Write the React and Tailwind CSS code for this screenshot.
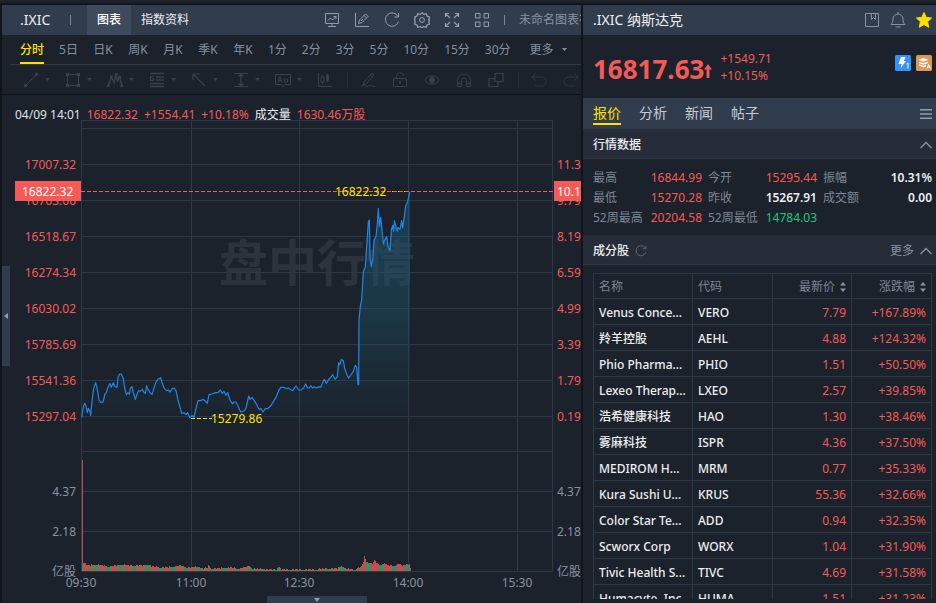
import React, { useState } from 'react';
import clsx from 'clsx';

const PERIODS = ['分时', '5日', '日K', '周K', '月K', '季K', '年K', '1分', '2分', '3分', '5分', '10分', '15分', '30分'];

const QUOTE_TABS = ['报价', '分析', '新闻', '帖子'];

const STATS = [
    { label: '最高', value: '16844.99', tone: 'up' },
    { label: '今开', value: '15295.44', tone: 'up' },
    { label: '振幅', value: '10.31%', tone: 'flat' },
    { label: '最低', value: '15270.28', tone: 'up' },
    { label: '昨收', value: '15267.91', tone: 'flat' },
    { label: '成交额', value: '0.00', tone: 'flat' },
    { label: '52周最高', value: '20204.58', tone: 'up' },
    { label: '52周最低', value: '14784.03', tone: 'down' },
];

const TONES = {
    up: 'text-[#f65a57]',
    down: 'text-[#21c47a]',
    flat: 'text-[#eceef1] font-semibold',
};

const STOCKS = [
    ['Venus Conce...', 'VERO', '7.79', '+167.89%'],
    ['羚羊控股', 'AEHL', '4.88', '+124.32%'],
    ['Phio Pharma...', 'PHIO', '1.51', '+50.50%'],
    ['Lexeo Therap...', 'LXEO', '2.57', '+39.85%'],
    ['浩希健康科技', 'HAO', '1.30', '+38.46%'],
    ['雾麻科技', 'ISPR', '4.36', '+37.50%'],
    ['MEDIROM H...', 'MRM', '0.77', '+35.33%'],
    ['Kura Sushi U...', 'KRUS', '55.36', '+32.66%'],
    ['Color Star Te...', 'ADD', '0.94', '+32.35%'],
    ['Scworx Corp', 'WORX', '1.04', '+31.90%'],
    ['Tivic Health S...', 'TIVC', '4.69', '+31.58%'],
    ['Humacyte, Inc.', 'HUMA', '1.51', '+31.23%'],
];

// y, price, change
const PRICE_AXIS = [
    [164, '17007.32', '11.39%'],
    [200, '16763.00', '9.79%'],
    [236, '16518.67', '8.19%'],
    [272, '16274.34', '6.59%'],
    [308, '16030.02', '4.99%'],
    [344, '15785.69', '3.39%'],
    [380, '15541.36', '1.79%'],
    [416, '15297.04', '0.19%'],
];

const VOLUME_AXIS = [
    [491, '4.37'],
    [531, '2.18'],
    [571, '亿股'],
];

const TIME_AXIS = [
    [81, '09:30'],
    [191, '11:00'],
    [299, '12:30'],
    [408, '14:00'],
    [517, '15:30'],
];

// Price line, drawn at three units per pixel
const PRICE_LINE =
    '245,352 250,320 254,310 258,318 262,338 265,325 270,335 272,346 277,295 281,265 287,248 292,268 297,300 303,308 309,306 315,282 319,278 324,262 330,250 334,262 340,248 345,260 351,262 354,232 359,222 364,222 370,236 375,268 379,284 384,278 388,282 391,264 396,260 400,278 406,298 412,280 416,272 420,274 427,268 431,276 436,280 440,257 444,268 450,278 456,284 462,264 468,246 474,238 482,233 487,250 493,266 500,272 505,270 510,276 517,266 523,264 528,272 534,300 540,322 545,340 552,338 558,344 563,338 570,354 576,346 582,352 588,325 594,302 602,302 609,298 615,302 622,310 627,284 636,282 645,278 654,278 661,270 667,280 672,274 678,286 683,278 690,300 697,312 702,306 708,306 714,318 722,336 730,334 738,325 746,288 750,298 756,292 763,302 770,314 777,328 783,326 789,336 796,326 803,326 812,318 820,305 828,292 836,272 842,262 852,262 860,266 866,264 870,268 878,272 888,258 896,270 904,270 912,262 917,252 923,264 928,264 933,257 938,264 944,260 950,264 956,260 962,262 968,248 973,238 979,250 985,240 992,232 998,224 1005,238 1012,230 1016,188 1020,194 1024,178 1030,182 1034,205 1040,222 1046,234 1052,226 1060,214 1066,196 1070,202 1074,254 1076,254 1077,60 1081,20 1085,0 1090,-85 1096,-100 1100,-160 1105,-235 1108,-240 1110,-130 1114,-100 1118,-120 1122,-180 1128,-190 1132,-230 1135,-275 1138,-220 1142,-248 1145,-220 1150,-168 1155,-182 1160,-190 1164,-160 1170,-148 1174,-210 1178,-224 1181,-206 1183,-238 1187,-224 1191,-206 1194,-218 1200,-212 1205,-238 1208,-216 1213,-250 1217,-282 1223,-295 1227,-315 1230,-325';

// x, height
const VOLUME_SHAPE = [
    [83, 8], [88, 5], [94, 6], [104, 5], [109, 4], [121, 6], [130, 5], [140, 5], [147, 6], [152, 4], [165, 3],
    [180, 5], [187, 3], [198, 4], [203, 2], [207, 3], [208, 5], [211, 2], [230, 3], [240, 2], [249, 5], [252, 2],
    [276, 1], [278, 4], [281, 1], [310, 1], [325, 2], [337, 2], [341, 5], [345, 2], [355, 1], [361, 4], [363, 9],
    [364, 14], [366, 9], [372, 7], [374, 10], [378, 6], [385, 7], [387, 5], [395, 5], [398, 7], [403, 5], [406, 7],
    [409, 6], [410, 2],
];

const volumeAt = (x) => {
    const i = VOLUME_SHAPE.findIndex(([px]) => px >= x);
    if (i <= 0) return VOLUME_SHAPE[0][1];
    const [x0, h0] = VOLUME_SHAPE[i - 1];
    const [x1, h1] = VOLUME_SHAPE[i];
    return h0 + ((h1 - h0) * (x - x0)) / (x1 - x0);
};

const VOLUME_BARS = Array.from({ length: 328 }, (_, i) => {
    const x = 83 + i;
    const noise = (i * 7919 + i * i * 31) % 13;
    const green = x > 363 ? noise < 4 : noise < 6;
    return { x, h: Math.max(1, Math.round(volumeAt(x) + (noise % 3) * 0.5)), color: green ? '#209a65' : '#c94b4c' };
});

const Icon = ({ size = 16, className, children }) => (
    <svg width={size} height={size} viewBox="0 0 16 16" fill="none" stroke="currentColor" strokeWidth="1" className={clsx('shrink-0', className)}>
        {children}
    </svg>
);

const Caret = ({ className }) => (
    <svg width="5" height="3" viewBox="0 0 5 3" fill="currentColor" className={clsx('shrink-0', className)}>
        <path d="M0 0h5L2.500 3z" />
    </svg>
);

const Chevron = () => (
    <svg width="12" height="8" viewBox="0 0 12 8" fill="none" stroke="#8993a2" strokeWidth="1.300">
        <path d="M.5 7 6 1.500 11.500 7" />
    </svg>
);

const SortIcon = () => (
    <svg width="6" height="10" viewBox="0 0 6 10" fill="#8993a2">
        <path d="M0 3.500h6L3 0zM0 6.500h6L3 10z" />
    </svg>
);

const HEADER_ICONS = [
    ['行情', <><path d="M1.500 1.500h13v10h-13zM8 11.500v3M4 14.500h8" /><path d="m4 8.500 2.500-2.500 2 2L12 4.500M9.500 4.500H12V7" /></>],
    ['编辑', <><path d="M1.500 1v13.500H15" /><path d="m4.500 11.500 1-3.500 6-6 2.500 2.500-6 6zM10 3.500 12.500 6M7 9l2-2" /></>],
    ['刷新', <><path d="M14 4.500A6.700 6.700 0 1 0 14.500 9.500" /><path d="M14.500 1v4h-4" /></>],
    ['设置', <><path strokeWidth="1.300" d="m8 .8 1.800 1.600 2.400-.6.9 2.300 2.300.9-.6 2.400L15.600 8l-.8 1.600.6 2.400-2.300.9-.9 2.300-2.400-.6L8 15.500l-1.800-.9-2.400.6-.9-2.300-2.300-.9.6-2.400L.4 8l.8-1.600L.6 5l2.300-.9.9-2.300 2.400.6z" /><circle cx="8" cy="8" r="2.400" /></>],
    ['全屏', <path strokeWidth="1.200" d="M5 1.500H1.500V5M1.500 1.500 6 6M11 1.500h3.500V5M14.500 1.500 10 6M5 14.500H1.500V11M1.500 14.500 6 10M11 14.500h3.500V11M14.500 14.500 10 10" />],
    ['布局', <path d="M1.500 1.500h4.500v4.500H1.500zM10 1.500h4.500v4.500H10zM1.500 10h4.500v4.500H1.500zM10 10h4.500v4.500H10z" />],
];

const MENU_TOOLS = [
    ['线段', <><path d="M3 13 13 3" /><circle cx="2.500" cy="13.500" r="1.300" fill="currentColor" /><circle cx="13.500" cy="2.500" r="1.300" fill="currentColor" /></>],
    ['矩形', <><path d="M2.500 2.500h11v11h-11z" /><path fill="currentColor" stroke="none" d="M1 1h3v3H1zM12 1h3v3h-3zM1 12h3v3H1zM12 12h3v3h-3z" /></>],
    ['形态', <><path strokeWidth="1.400" d="m1 14 3.500-9L7 10.500 9 3l1.500 6L12.500 5l2.500 9" /><path fill="currentColor" stroke="none" d="M0 12.500h2.500V15H0zM3 3.500h2.500V6H3zM8 1h2.500v2.500H8zM11.500 4H14v2.500h-2.500zM13.500 12.500H16V15h-2.500z" /></>],
    ['斐波那契', <><path strokeWidth="1.400" d="M1 1.500h14M7 5h8M7 8h8M1 11.500h14M1 14.500h14" /><path strokeWidth="1.200" d="M4.500 4.500h-3v4h3V7H3" /></>],
    ['箭头', <path strokeWidth="1.200" d="M2 8V2h7M2 2l12 12" />],
    ['测量', <path strokeWidth="1.200" d="M1 1.500h14M1 14.500h14M8 2v12M5.500 4.500 8 2l2.500 2.500M5.500 11.500 8 14l2.500-2.500" />],
    ['标注', <><path d="M.5 2.500h15v10H10l-2 2-2-2H.5z" /><path d="m3 10 2-5.500L7 10M4 8.500h2M12.500 7v3M12.500 8.500a1.700 1.700 0 1 0-3.400 0 1.700 1.700 0 0 0 3.400 0" /></>],
];

const TOOLS = [
    ['画笔', <><path d="m4 10 8-9 2 2-8 9-3 1zM10.500 3l2 2" /><path d="M1 14.500c3-3 4-1 5 0s2-1 4-1 3 1 5 1" /></>],
    ['锁定', <><path d="M1.500 6.500h13v8h-13zM4.500 6.500v-2a3.500 3.500 0 0 1 7-.5" /><path strokeWidth="1.500" d="M8 9v3" /></>],
    ['显示', <><path d="M.5 8C4 2.500 12 2.500 15.500 8 12 13.500 4 13.500.5 8z" /><circle cx="8" cy="8" r="2.500" fill="currentColor" /></>],
    ['磁吸', <path d="M1.500 14.500v-6a6.500 6.500 0 0 1 13 0v6h-4v-6a2.500 2.500 0 0 0-5 0v6zM1.500 11.500h4M10.500 11.500h4" />],
    ['组合', <path strokeWidth="1.200" d="M7 1.500h8v8H7zM7 6.500H1v8h9v-5" />],
];

const ChartHeader = () => (
    <header className="flex h-[30px] shrink-0 items-center bg-[#313c4d] text-xs whitespace-nowrap">
        <h1 className="w-[68px] shrink-0 pl-[18px] text-sm text-[#eceef1]">.IXIC</h1>
        <span className="h-2.5 w-px shrink-0 bg-[#7a8596]" />
        <button className="ml-4 h-full shrink-0 bg-[#3f4a5c] px-2.5 font-medium text-white">图表</button>
        <button className="h-full shrink-0 px-2.5 text-[#eceef1]">指数资料</button>
        <div className="ml-[125px] flex shrink-0 gap-3.5 text-[#939dab]">
            {HEADER_ICONS.map(([name, shape]) => (
                <button key={name} aria-label={name}>
                    <Icon>{shape}</Icon>
                </button>
            ))}
        </div>
        <span className="mx-3.5 h-2.5 w-px shrink-0 bg-[#7a8596]" />
        <button className="text-[#8993a2]">未命名图表布局</button>
    </header>
);

const PeriodBar = () => {
    const [active, setActive] = useState('分时');

    return (
        <nav className="ml-2 flex h-[30px] shrink-0 gap-[15px] border-b border-[#2f3b49] pl-2.5 text-xs whitespace-nowrap text-[#8590a0]">
            {PERIODS.map((period) => (
                <button
                    key={period}
                    onClick={() => setActive(period)}
                    className={clsx(
                        'h-[29px] shrink-0 border-b-2 pt-0.5',
                        period.endsWith('K') && 'w-5',
                        period === active ? 'border-[#ffe100] font-medium text-[#ffe100]' : 'border-transparent'
                    )}
                >
                    {period}
                </button>
            ))}
            <button className="ml-1 flex shrink-0 items-center gap-2">
                更多 <Caret />
            </button>
        </nav>
    );
};

const DrawingBar = () => (
    <div className="flex h-[30px] shrink-0 items-center border-b border-[#10151b] pl-[21px] text-[#38424e]">
        {MENU_TOOLS.map(([name, shape]) => (
            <button key={name} aria-label={name} className="flex w-[42px] shrink-0 items-center gap-1.5">
                <Icon>{shape}</Icon>
                <Caret />
            </button>
        ))}
        <button aria-label="指标" className="shrink-0">
            <Icon>
                <path d="M1.500 1v13.500H15M5.500 3v2M5.500 10v2M4 5h3v5H4zM10.500 2v8" />
                <path d="M9.500 3.500h2v5h-2z" fill="currentColor" />
            </Icon>
        </button>
        <span className="mx-3.5 h-3.5 w-px shrink-0 bg-[#262e39]" />
        <div className="-ml-0.5 flex shrink-0 gap-4">
            {TOOLS.map(([name, shape]) => (
                <button key={name} aria-label={name}>
                    <Icon>{shape}</Icon>
                </button>
            ))}
        </div>
        <span className="mx-3.5 h-3.5 w-px shrink-0 bg-[#262e39]" />
        <div className="-ml-0.5 flex shrink-0 gap-4 text-[#2e3743]">
            <button aria-label="撤销">
                <Icon><path d="M4.500 1.500 1 5l3.500 3.500M1 5h9.500a4.500 4.500 0 0 1 0 9H4" /></Icon>
            </button>
            <button aria-label="重做">
                <Icon><path d="M11.500 1.500 15 5l-3.500 3.500M15 5H5.500a4.500 4.500 0 0 0 0 9H12" /></Icon>
            </button>
        </div>
    </div>
);

const Chart = () => (
    <svg viewBox="2 120 579 483" preserveAspectRatio="xMinYMin meet" className="min-h-0 w-full flex-1 text-xs">
        <defs>
            <linearGradient id="area" gradientUnits="userSpaceOnUse" x1="0" y1="191" x2="0" y2="440">
                <stop offset="0" stopColor="#1b5d78" stopOpacity=".5" />
                <stop offset=".5" stopColor="#1b5870" stopOpacity=".38" />
                <stop offset=".85" stopColor="#1b3a48" stopOpacity=".2" />
                <stop offset="1" stopColor="#1b222b" stopOpacity="0" />
            </linearGradient>
            <clipPath id="under">
                <polygon points={`${PRICE_LINE} 1230,453 245,453`} transform="translate(0 300) scale(.33333)" />
            </clipPath>
        </defs>

        <text x="219" y="281" fill="#2b333d" fontSize="49" fontWeight="700">盘中行情</text>

        {/* grid */}
        <g stroke="#2e3947" shapeRendering="crispEdges">
            {[120, 128, 164, 200, 236, 272, 308, 344, 380, 416, 451, 491, 531, 571].map((y) => (
                <line key={y} x1="81" x2="553" y1={y + 0.5} y2={y + 0.5} />
            ))}
            {[81, 191, 299, 408, 517, 552].map((x) => (
                <line key={x} x1={x + 0.5} x2={x + 0.5} y1="120" y2="572" />
            ))}
        </g>

        {/* price */}
        <rect x="81" y="185" width="330" height="266" fill="url(#area)" clipPath="url(#under)" />
        <line x1="81" x2="553" y1="191.500" y2="191.500" stroke="#f65a57" strokeDasharray="4 2" shapeRendering="crispEdges" />
        <polyline points={PRICE_LINE} transform="translate(0 300) scale(.33333)" fill="none" stroke="#2186e6" strokeWidth="3.600" strokeLinejoin="round" />
        <g stroke="#ffe100" strokeDasharray="4 2" shapeRendering="crispEdges">
            <line x1="191" x2="212" y1="418.500" y2="418.500" />
            <line x1="392" x2="408" y1="191.500" y2="191.500" strokeDasharray="1 5" />
        </g>
        <g fill="#ffe100">
            <text x="211" y="423">15279.86</text>
            <text x="335" y="196">16822.32</text>
        </g>

        {/* volume */}
        <g shapeRendering="crispEdges">
            {VOLUME_BARS.map((bar) => (
                <rect key={bar.x} x={bar.x} y={571 - bar.h} width="1" height={bar.h} fill={bar.color} />
            ))}
            <rect x="82" y="460" width="1" height="111" fill="#c94b4c" />
        </g>

        {/* axes */}
        <g fill="#f65a57">
            {PRICE_AXIS.map(([y, price, change]) => (
                <React.Fragment key={y}>
                    <text x="76" y={y + 5} textAnchor="end">{price}</text>
                    <text x="557" y={y + 5}>{change}</text>
                </React.Fragment>
            ))}
            <rect x="15" y="181" width="66" height="20" />
            <rect x="554" y="181" width="60" height="20" />
        </g>
        <g fill="#fff">
            <text x="22" y="196">16822.32</text>
            <text x="557" y="196">10.18%</text>
        </g>
        <g fill="#8993a2">
            {VOLUME_AXIS.map(([y, label]) => (
                <React.Fragment key={y}>
                    <text x="76" y={y + 5} textAnchor="end">{label}</text>
                    <text x="557" y={y + 5}>{label}</text>
                </React.Fragment>
            ))}
            {TIME_AXIS.map(([x, label]) => (
                <text key={x} x={x} y="587" textAnchor="middle">{label}</text>
            ))}
        </g>
    </svg>
);

const ChartPanel = () => (
    <main className="relative flex min-w-0 flex-1 flex-col overflow-hidden bg-[#1b222b]">
        <ChartHeader />
        <PeriodBar />
        <DrawingBar />
        <div className="flex h-[25px] shrink-0 gap-1.5 pt-3.5 pl-[13px] text-xs leading-3 whitespace-nowrap text-[#f65a57]">
            <span className="text-[#dfe3e8]">04/09 14:01</span>
            <span>16822.32</span>
            <span>+1554.41</span>
            <span>+10.18%</span>
            <span className="text-[#eceef1]">成交量</span>
            <span>1630.46万股</span>
        </div>
        <Chart />
        <button aria-label="展开左侧" className="absolute top-[261px] left-0 flex h-[100px] w-2 items-center justify-center bg-[#313c4d] text-[#939dab]">
            <svg width="4" height="6" viewBox="0 0 4 6" fill="currentColor"><path d="M4 0v6L0 3z" /></svg>
        </button>
        <button aria-label="收起底部" className="absolute bottom-0 left-[265px] flex h-[7px] w-[100px] items-center justify-center bg-[#313c4d] text-[#939dab]">
            <svg width="6" height="4" viewBox="0 0 6 4" fill="currentColor"><path d="M0 0h6L3 4z" /></svg>
        </button>
    </main>
);

const SectionHeader = ({ title, children }) => (
    <div className="flex h-[30px] shrink-0 items-center justify-between border-b border-[#2e3947] bg-[#262d38] pt-0.5 pr-1 pl-2.5 text-xs">
        {title}
        {children}
    </div>
);

const QuotePanel = () => {
    const [tab, setTab] = useState('报价');

    return (
        <aside className="flex w-[353px] shrink-0 flex-col overflow-hidden bg-[#1b222b] pb-1">
            <header className="flex h-[30px] shrink-0 items-center bg-[#313c4d] pr-1 pl-2.5 text-sm text-[#eceef1]">
                <h2 className="flex-1">.IXIC 纳斯达克</h2>
                <div className="flex items-center gap-2.5 text-[#8993a2]">
                    <button aria-label="笔记"><Icon><path d="M1.500 1.500h13v13h-13zM7.500 1.500v6l2-2 2 2v-6" /></Icon></button>
                    <button aria-label="提醒"><Icon><path d="M1 12.500h14c-1.500-1.500-2-2.500-2-5.500a5 5 0 0 0-10 0c0 3-.5 4-2 5.500zM8 2V0M5.500 15h5" /></Icon></button>
                    <button aria-label="自选">
                        <svg width="16" height="16" viewBox="0 0 16 16" fill="#ffe100" stroke="#ffe100" strokeLinejoin="round">
                            <path d="m8 .5 2.200 4.900 5.300.6-3.900 3.600 1.100 5.700L8 12.600l-4.700 2.700 1.100-5.700L.5 6l5.300-.6z" />
                        </svg>
                    </button>
                </div>
            </header>

            <div className="flex h-[63px] shrink-0 items-center pr-1 pl-2.5 text-[#f65a57]">
                <strong className="pt-1 text-[26px] leading-8 font-bold">16817.63</strong>
                <svg width="8" height="14" viewBox="0 0 8 14" fill="currentColor" className="mt-2">
                    <path d="M4 0 0 5.500h2.600V14h2.800V5.500H8z" />
                </svg>
                <div className="ml-2 flex-1 text-xs leading-[17px]">
                    <p>+1549.71</p>
                    <p>+10.15%</p>
                </div>
                <div className="mb-2 flex gap-[5px]">
                    <svg width="16" height="16" viewBox="0 0 16 16">
                        <rect width="16" height="16" rx="1.500" fill="#3193fb" />
                        <path d="M6 2h4.500L8.800 6H11l-5.500 7.500L6.500 9H3.500z" fill="#fff" />
                        <path d="m11.500 9 1.500-1v5.500" fill="none" stroke="#fff" />
                    </svg>
                    <svg width="16" height="16" viewBox="0 0 16 16">
                        <rect width="16" height="16" rx="1.500" fill="#d8985a" />
                        <path d="m7.500 3 5 1.800-5 2-5-2z" fill="#fff" />
                        <path d="m3 7.300 4.500 1.700L12 7.300M3 9.800l4.500 1.700 2.500-1" fill="none" stroke="#fff" strokeWidth="1.400" />
                        <path d="m11 13.500 1.700-4 1.700 4M11.500 12h2.400" fill="none" stroke="#fff" />
                    </svg>
                </div>
            </div>

            <nav className="flex h-[31px] shrink-0 items-center gap-[18px] bg-[#313c4d] pr-1 pl-2.5 text-sm text-[#c5ccd6]">
                {QUOTE_TABS.map((name) => (
                    <button
                        key={name}
                        onClick={() => setTab(name)}
                        className={clsx('h-[23px] border-b-2 leading-5', name === tab ? 'border-[#ffe100] text-[#ffe100]' : 'border-transparent')}
                    >
                        {name}
                    </button>
                ))}
                <button aria-label="菜单" className="ml-auto">
                    <svg width="12" height="10" viewBox="0 0 12 10" fill="#939dab"><path d="M0 0h12v1.500H0zM0 4.200h12v1.500H0zM0 8.500h12V10H0z" /></svg>
                </button>
            </nav>

            <SectionHeader title={<h3 className="font-medium text-[#eceef1]">行情数据</h3>}>
                <button aria-label="收起"><Chevron /></button>
            </SectionHeader>

            <dl className="grid shrink-0 grid-cols-3 gap-x-1.5 pt-[9px] pr-1 pb-[7px] pl-2.5 text-xs leading-5 whitespace-nowrap">
                {STATS.map((stat) => (
                    <div key={stat.label} className="flex justify-between">
                        <dt className="text-[#7d8796]">{stat.label}</dt>
                        <dd className={TONES[stat.tone]}>{stat.value}</dd>
                    </div>
                ))}
            </dl>

            <SectionHeader
                title={
                    <div className="flex items-center gap-1.5">
                        <h3 className="font-medium text-[#eceef1]">成分股</h3>
                        <button aria-label="刷新" className="text-[#5d6877]">
                            <Icon size={12}><path strokeWidth="1.300" d="M14 4.500A6.700 6.700 0 1 0 14.500 9.500M14.500 1v4h-4" /></Icon>
                        </button>
                    </div>
                }
            >
                <button className="flex items-center gap-1.5 text-[#8993a2]">更多 <Chevron /></button>
            </SectionHeader>

            <div className="min-h-0 flex-1 overflow-hidden pt-2 pr-[5px] pl-2.5">
                <table className="w-full table-fixed border-collapse text-xs whitespace-nowrap">
                    <colgroup>
                        <col className="w-[99px]" />
                        <col className="w-20" />
                        <col className="w-[79px]" />
                        <col className="w-20" />
                    </colgroup>
                    <thead>
                        <tr className="h-[25px] text-[#7d8796]">
                            <th className="border border-[#2e3947] px-[5px] pt-0.5 text-left font-normal">名称</th>
                            <th className="border border-[#2e3947] px-[5px] pt-0.5 text-left font-normal">代码</th>
                            {['最新价', '涨跌幅'].map((name) => (
                                <th key={name} className="border border-[#2e3947] px-[5px] pt-0.5 font-normal">
                                    <button className="ml-auto flex items-center gap-[5px]">{name} <SortIcon /></button>
                                </th>
                            ))}
                        </tr>
                    </thead>
                    <tbody>
                        {STOCKS.map(([name, code, price, change]) => (
                            <tr key={code} className="h-[26px] font-medium text-[#eceef1]">
                                <td className="border border-[#2e3947] px-[5px] pt-0.5">{name}</td>
                                <td className="border border-[#2e3947] px-[5px] pt-0.5">{code}</td>
                                <td className="border border-[#2e3947] px-[5px] pt-0.5 text-right font-normal text-[#f65a57]">{price}</td>
                                <td className="border border-[#2e3947] px-[5px] pt-0.5 text-right font-normal text-[#f65a57]">{change}</td>
                            </tr>
                        ))}
                    </tbody>
                </table>
            </div>
        </aside>
    );
};

const App = () => (
    <div className="flex h-screen flex-col overflow-hidden bg-[#1b222b] pt-[3px] font-['Noto_Sans','Noto_Sans_CJK_SC',sans-serif]">
        <div className="flex min-h-0 flex-1 gap-0.5 border-t-2 border-l-2 border-[#10151b] bg-[#10151b]">
            <ChartPanel />
            <QuotePanel />
        </div>
    </div>
);

export default App;
